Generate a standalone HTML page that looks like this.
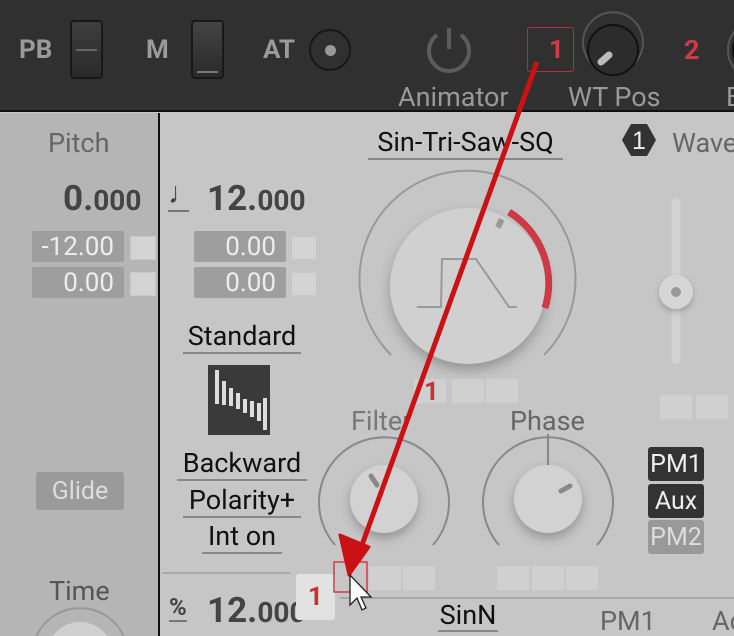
<!DOCTYPE html>
<html style="width:734px;height:636px;overflow:hidden"><head><meta charset="utf-8"><style>
*{margin:0;padding:0;box-sizing:border-box}
body{width:734px;height:636px;overflow:hidden;position:relative;background:#c6c6c6;font-family:"Roboto","Liberation Sans",sans-serif}
.a{position:absolute;white-space:nowrap}
.top{left:0;top:0;width:734px;height:112px;background:#303030;border-bottom:2px solid #111}
.left{left:0;top:113px;width:160px;height:523px;background:#b5b5b5;border-right:2px solid #111;overflow:hidden}
.lbl{color:#9a9a9a;font-weight:bold;font-size:26px}
.vb{background:#9e9e9e;color:#eee;font-size:26px;text-align:right;padding-right:10px;border-radius:2px;height:31px;line-height:33px}
.sq{background:#d4d4d4;border:1px solid #c8c8c8;width:26px;height:24px}
.ul{color:#111;font-size:27px;border-bottom:2px solid #888;text-align:center;line-height:32px}
.pm{background:#333;color:#eee;font-size:25px;width:56px;height:34px;line-height:36px;text-align:center;border-radius:3px}
.sb{background:#d0d0d0;width:32px;height:24px}
</style></head><body>
<div class="a top"></div>
<div class="a lbl" style="left:19px;top:35px">PB</div>
<div class="a lbl" style="left:146px;top:35px">M</div>
<div class="a lbl" style="left:263px;top:35px">AT</div>
<div class="a" style="left:70px;top:20px;width:33px;height:59px;border:2px solid #181818;border-radius:4px;background:linear-gradient(#3e3e3e,#2a2a2a)"><div style="position:absolute;left:4px;right:4px;top:27px;height:2px;background:#666"></div></div>
<div class="a" style="left:191px;top:20px;width:33px;height:59px;border:2px solid #181818;border-radius:4px;background:linear-gradient(#444,#2a2a2a)"><div style="position:absolute;left:4px;right:4px;bottom:4px;height:2px;background:#777"></div></div>
<div class="a" style="left:309px;top:29px;width:42px;height:42px;border:2px solid #181818;border-radius:50%"><div style="position:absolute;left:14px;top:14px;width:11px;height:11px;border-radius:50%;background:#999"></div></div>
<div class="a" style="left:398px;top:81px;color:#999;font-size:27px">Animator</div>
<div class="a" style="left:568px;top:81px;color:#999;font-size:27px">WT Pos</div>
<div class="a" style="left:726px;top:81px;color:#999;font-size:27px">B</div>
<div class="a" style="left:527px;top:27px;width:47px;height:45px;border:1.5px solid #b3303a;border-radius:3px;color:#d23a45;font-weight:bold;font-size:26px;text-align:center;line-height:44px;padding-left:12px">1</div>
<div class="a" style="left:684px;top:34px;color:#d23a45;font-weight:bold;font-size:27px">2</div>

<div class="a left"></div>
<div class="a" style="left:48px;top:127px;color:#666;font-size:27px">Pitch</div>
<div class="a" style="left:63px;top:178px;color:#444;font-weight:bold;font-size:35px">0.<span style="font-size:28px">000</span></div>
<div class="a vb" style="left:32px;top:231px;width:92px">-12.00</div>
<div class="a vb" style="left:32px;top:267px;width:92px">0.00</div>
<div class="a sq" style="left:130px;top:236px"></div>
<div class="a sq" style="left:130px;top:272px"></div>
<div class="a" style="left:36px;top:472px;width:88px;height:38px;background:#9a9a9a;border-radius:3px;color:#ddd;font-size:25px;text-align:center;line-height:40px">Glide</div>
<div class="a" style="left:49px;top:575px;color:#555;font-size:27px">Time</div>

<div class="a" style="left:168px;top:178px;color:#444;font-size:30px;border-bottom:2px solid #777;width:21px;line-height:32px">♩</div>
<div class="a" style="left:207px;top:178px;color:#444;font-weight:bold;font-size:35px">12.<span style="font-size:28px">000</span></div>
<div class="a vb" style="left:194px;top:231px;width:92px">0.00</div>
<div class="a vb" style="left:194px;top:267px;width:92px">0.00</div>
<div class="a sq" style="left:291px;top:236px"></div>
<div class="a sq" style="left:291px;top:272px"></div>
<div class="a ul" style="left:183px;top:320px;width:118px">Standard</div>
<div class="a" style="left:208px;top:365px;width:62px;height:70px;background:#3a3a3a"></div>
<div class="a ul" style="left:177px;top:447px;width:130px">Backward</div>
<div class="a ul" style="left:183px;top:484px;width:118px">Polarity+</div>
<div class="a ul" style="left:202px;top:520px;width:80px">Int on</div>

<div class="a ul" style="left:368px;top:126px;width:195px">Sin-Tri-Saw-SQ</div>
<div class="a" style="left:672px;top:127px;color:#666;font-size:27px">Wave</div>
<div class="a" style="left:351px;top:405px;color:#777;font-size:27px">Filter</div>
<div class="a" style="left:510px;top:405px;color:#666;font-size:27px">Phase</div>
<div class="a pm" style="left:648px;top:447px">PM1</div>
<div class="a pm" style="left:648px;top:484px">Aux</div>
<div class="a pm" style="left:648px;top:520px;background:#999;color:#ddd">PM2</div>
<div class="a sb" style="left:414px;top:379px"></div><div class="a sb" style="left:452px;top:379px"></div><div class="a sb" style="left:486px;top:379px"></div>
<div class="a" style="left:424px;top:377px;color:#c8303a;font-weight:bold;font-size:26px">1</div>
<div class="a sb" style="left:660px;top:395px"></div><div class="a sb" style="left:696px;top:395px"></div>
<div class="a sb" style="left:369px;top:566px"></div><div class="a sb" style="left:403px;top:566px"></div>
<div class="a sb" style="left:497px;top:566px"></div><div class="a sb" style="left:532px;top:566px"></div><div class="a sb" style="left:566px;top:566px"></div>
<div class="a" style="left:162px;top:572px;width:128px;height:2px;background:#aaa"></div>
<div class="a" style="left:340px;top:597px;width:394px;height:2px;background:#aaa"></div>
<div class="a" style="left:169px;top:594px;color:#444;font-weight:bold;font-size:24px;border-bottom:2px solid #777;line-height:26px">%</div>
<div class="a" style="left:207px;top:592px;color:#444;font-weight:bold;font-size:35px;line-height:38px">12.<span style="font-size:28px">000</span></div>
<div class="a ul" style="left:438px;top:600px;width:60px;line-height:30px">SinN</div>
<div class="a" style="left:600px;top:606px;color:#666;font-size:27px;line-height:30px">PM1</div>
<div class="a" style="left:712px;top:606px;color:#666;font-size:27px;line-height:30px">Ac</div>
<div class="a" style="left:296px;top:574px;width:39px;height:46px;background:#e2e2e2;border-radius:3px;color:#c8303a;font-weight:bold;font-size:26px;text-align:center;line-height:46px">1</div>

<svg class="a" style="left:0;top:0" width="734" height="636">
<path d="M36.4 636 A48 48 0 0 1 123.6 636" fill="none" stroke="#999" stroke-width="2"/>
<path d="M52.5 636 A34 34 0 0 1 107.5 636 Z" fill="#d0d0d0"/>
<path d="M437 35 A20 20 0 1 0 461 35" fill="none" stroke="#5c5c5c" stroke-width="4"/><line x1="449" y1="28" x2="449" y2="49" stroke="#5c5c5c" stroke-width="4"/>
<path d="M596 67 A30 30 0 1 1 630 67" fill="none" stroke="#555" stroke-width="2"/>
<circle cx="613" cy="50" r="25" fill="#2c2c2c" stroke="#111" stroke-width="2"/>
<line x1="601" y1="62" x2="609" y2="55" stroke="#bbb" stroke-width="7" stroke-linecap="round"/>
<circle cx="758" cy="50" r="30" fill="none" stroke="#555" stroke-width="2"/>
<circle cx="758" cy="50" r="25" fill="#2c2c2c" stroke="#111" stroke-width="2"/>
<path d="M631 124 L647 124 L656 140 L647 156 L631 156 L622 140Z" fill="#333"/><text x="639" y="149" fill="#eee" font-size="25" text-anchor="middle" font-family="Liberation Sans">1</text>
<path d="M391 355 A108 108 0 1 1 544 355" fill="none" stroke="#999" stroke-width="2"/>
<circle cx="468" cy="286" r="78" fill="#d0d0d0" style="filter:drop-shadow(0 6px 6px rgba(0,0,0,.25))"/>
<path d="M509 212 A84 84 0 0 1 545 308" fill="none" stroke="#cd3a45" stroke-width="7"/>
<rect x="497" y="219" width="6" height="9" fill="#999" transform="rotate(25 500 223)"/>
<polyline points="417,307 441,307 442,259 476,259 509,307 517,307" fill="none" stroke="#9a9a9a" stroke-width="2"/>
<line x1="676" y1="203" x2="676" y2="360" stroke="#d2d2d2" stroke-width="9" stroke-linecap="round"/>
<circle cx="676" cy="292" r="17" fill="#d6d6d6" style="filter:drop-shadow(0 3px 3px rgba(0,0,0,.2))"/><circle cx="676" cy="292" r="5" fill="#999"/>
<g fill="#ddd"><rect x="215" y="370" width="4" height="34"/><rect x="222" y="381" width="4" height="24"/><rect x="229" y="388" width="4" height="18"/><rect x="236" y="393" width="4" height="16"/><rect x="243" y="399" width="4" height="14"/><rect x="250" y="401" width="4" height="16"/><rect x="257" y="403" width="4" height="18"/><rect x="263" y="398" width="4" height="32"/></g>
<path d="M335 545 A65 65 0 1 1 433 545" fill="none" stroke="#888" stroke-width="2"/>
<circle cx="384" cy="499" r="34" fill="#d2d2d2" style="filter:drop-shadow(0 5px 5px rgba(0,0,0,.25))"/>
<line x1="371" y1="476" x2="377" y2="485" stroke="#888" stroke-width="5" stroke-linecap="round"/>
<path d="M499 545 A65 65 0 1 1 597 545" fill="none" stroke="#888" stroke-width="2"/><line x1="548" y1="434" x2="548" y2="465" stroke="#888" stroke-width="2"/>
<circle cx="548" cy="499" r="34" fill="#d2d2d2" style="filter:drop-shadow(0 5px 5px rgba(0,0,0,.25))"/>
<line x1="561" y1="491" x2="570" y2="486" stroke="#888" stroke-width="5" stroke-linecap="round"/>
<rect x="334" y="562" width="33" height="30" fill="none" stroke="#d23a45" stroke-width="1.5"/>
<line x1="537" y1="62" x2="362" y2="545" stroke="#cc1115" stroke-width="5"/>
<path d="M349 575 L340 535 L369 547Z" fill="#cc1115" stroke="#cc1115" stroke-width="3" stroke-linejoin="round"/>
<path d="M350 575 L350 605 L357 598 L362 610 L366 608 L361 597 L371 597Z" fill="#fff" stroke="#222" stroke-width="1.3"/>
</svg>
</body></html>
